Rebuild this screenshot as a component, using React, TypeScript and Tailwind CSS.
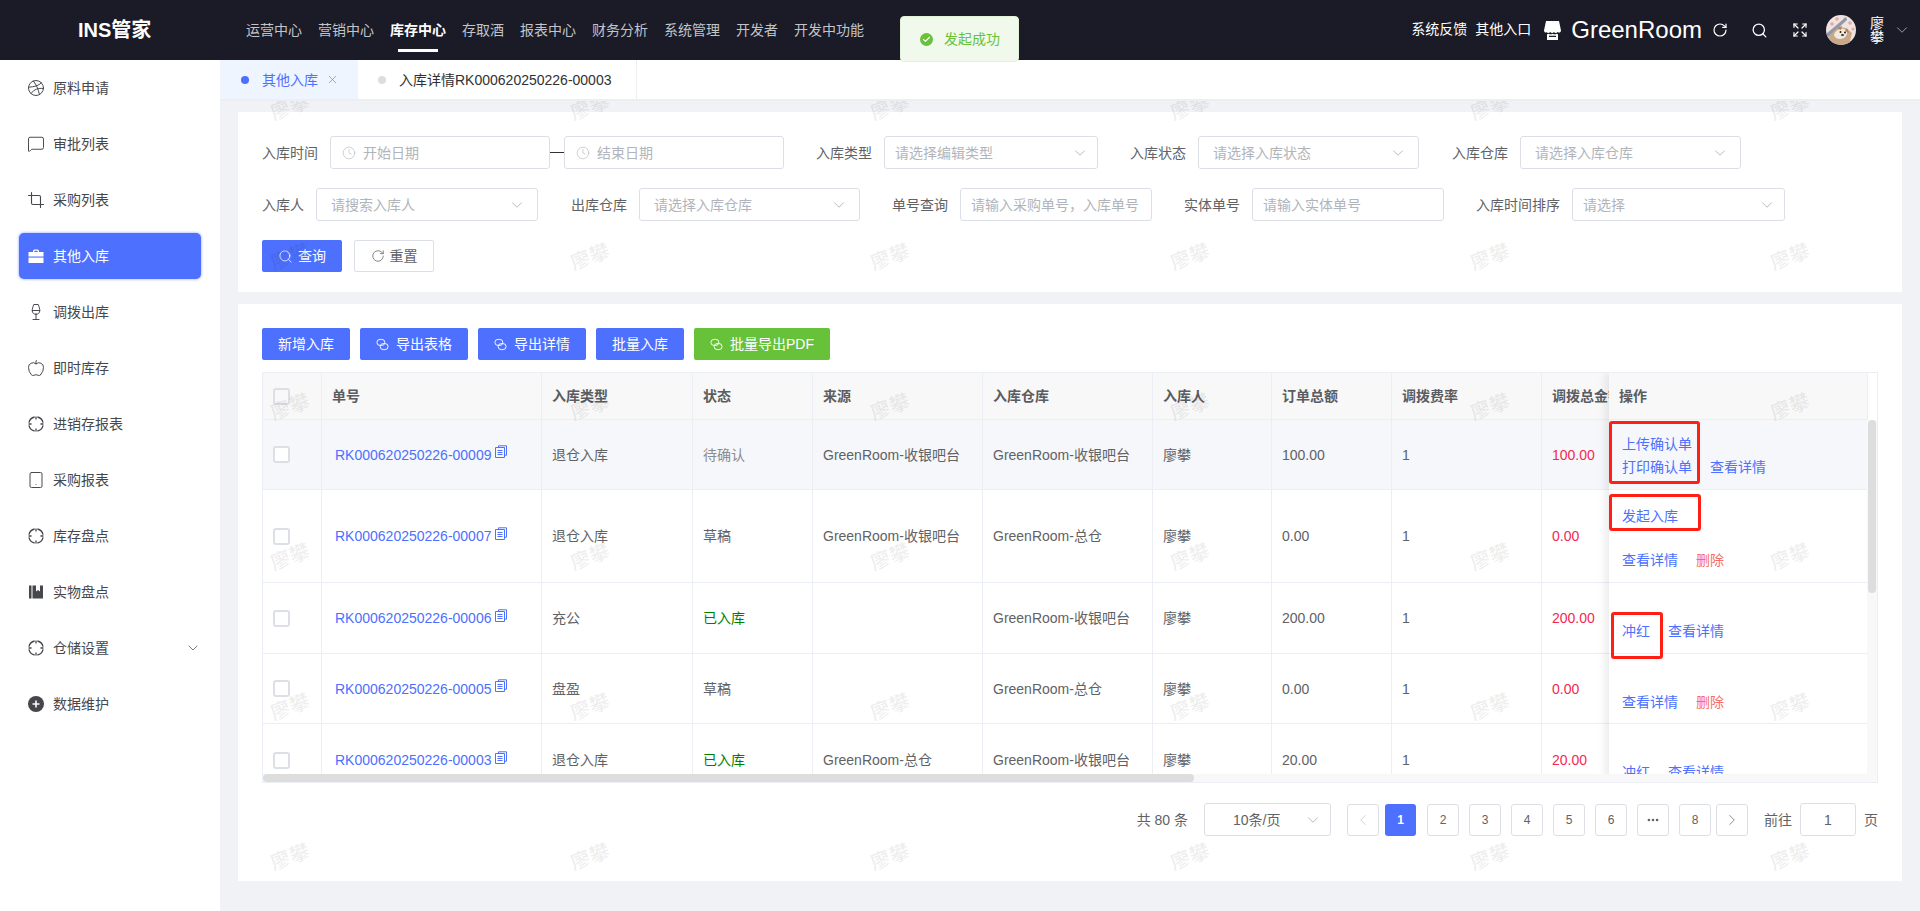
import { ReactNode } from 'react'
import {
  Apple,
  Check,
  ChevronDown,
  ChevronLeft,
  ChevronRight,
  Clock,
  Crop,
  Dribbble,
  Ellipsis,
  Expand,
  MessageSquare,
  RotateCw,
  Search,
  Tablet,
  Wine,
  X,
} from 'lucide-react'

const nav = ['运营中心', '营销中心', '库存中心', '存取酒', '报表中心', '财务分析', '系统管理', '开发者', '开发中功能']

function AimIcon() {
  return (
    <svg viewBox="0 0 16 16" className="w-4 h-4 shrink-0" fill="none" stroke="currentColor" strokeWidth="1.3">
      <path d="M6.6 1A7.100 7.100 0 0 0 1 6.600M9.400 1a7.100 7.100 0 0 1 5.600 5.600M15 9.400A7.100 7.100 0 0 1 9.400 15M6.600 15A7.100 7.100 0 0 1 1 9.400" />
      <path d="M8 .5v3M8 12.500v3M.5 8h3M12.500 8h3" />
    </svg>
  )
}

function SuitcaseIcon() {
  return (
    <svg viewBox="0 0 16 16" className="w-4 h-4 shrink-0" fill="currentColor">
      <path d="M5 3.400C5 2.300 5.600 1.600 6.600 1.600h2.800c1 0 1.600.7 1.600 1.800V4h4.500v4.600H.5V4H5v-.6ZM6.300 4h3.400v-.7c0-.3-.2-.5-.5-.5H6.800c-.3 0-.5.2-.5.5V4Z" />
      <path d="M.5 9.600h15V15H.5z" />
    </svg>
  )
}

function NotebookIcon() {
  return (
    <svg viewBox="0 0 16 16" className="w-4 h-4 shrink-0" fill="currentColor">
      <path d="M1 1.500h2.500v13H1zM4.500 1.500H8v6l2-1.600 2 1.600v-6h3v13H4.500z" />
    </svg>
  )
}

function PlusCircleIcon() {
  return (
    <svg viewBox="0 0 16 16" className="w-4 h-4 shrink-0">
      <circle cx="8" cy="8" r="8" fill="currentColor" />
      <path d="M8 4.500v7M4.500 8h7" stroke="#fff" strokeWidth="1.600" />
    </svg>
  )
}

function ExportIcon() {
  return (
    <svg viewBox="0 0 14 14" className="w-[13px] h-[13px] shrink-0" fill="none" stroke="currentColor" strokeWidth="1">
      <rect x="1" y="1.500" width="8.500" height="6.500" rx="3.250" />
      <rect x="4.500" y="6" width="8.500" height="6.500" rx="3.250" />
    </svg>
  )
}

function CopyIcon() {
  return (
    <svg viewBox="0 0 12 13" className="w-3 h-[13px] ml-1 -mt-[6px] shrink-0 text-[#4d70ff]" fill="none" stroke="currentColor" strokeWidth="1">
      <path d="M3.500 2V.8h8v9.400H9.500" />
      <path d="M.5 2.500h9v10h-9z" />
      <path d="M2.500 5.500h5M2.500 7.500h5M2.500 9.500h5" />
    </svg>
  )
}

function StoreIcon() {
  return (
    <svg viewBox="0 0 17 19" className="w-[17px] h-[19px] shrink-0" fill="#fff">
      <path d="M2 0h13l2 9.500c0 2-2.300 2.600-3.400 1.400-.9 1.300-2.900 1.300-3.700 0-.8 1.300-2.800 1.300-3.700 0-.9 1.300-2.900 1.300-3.700 0C2.300 12.100 0 11.500 0 9.500L2 0Z" />
      <path d="M3 13.200c.7 0 1.300-.2 1.600-.5.9.8 2.700.8 3.900 0 1.200.8 3 .8 3.900 0 .3.3.9.5 1.600.5V19H3v-5.800Zm2 2.800h7v-1.200H5V16Z" />
    </svg>
  )
}

function Avatar() {
  return (
    <svg viewBox="0 0 30 30" className="w-[30px] h-[30px] shrink-0 rounded-full">
      <rect width="30" height="30" fill="#efe3df" />
      <circle cx="6" cy="9" r="1.800" fill="#e3a9a4" />
      <circle cx="11" cy="4" r="1.800" fill="#e3a9a4" />
      <circle cx="24" cy="8" r="1.800" fill="#e3a9a4" />
      <circle cx="27" cy="14" r="1.500" fill="#e3a9a4" />
      <circle cx="19" cy="4" r="1.500" fill="#e3a9a4" />
      <path d="M0 19 20 2l1 3L0 24Z" fill="#8f97a8" />
      <path d="M4 30 3 21l9-9 8 1 6 5-3 12Z" fill="#c8a888" />
      <path d="M8 20c1-5 8-8 12-5 2 2 1 6-2 8-4 2-9 1-10-3Z" fill="#f2e9dd" />
      <path d="M11 13l5-2-1 4ZM21 13l2 5-4-2Z" fill="#b7824f" />
      <circle cx="14.500" cy="17" r="1" fill="#2a2220" />
      <circle cx="19" cy="17.500" r="1" fill="#2a2220" />
      <ellipse cx="16.500" cy="20" rx="1.500" ry="1.100" fill="#3a2c28" />
    </svg>
  )
}

function SideItem({ icon, label, active, arrow }: { icon: ReactNode; label: string; active?: boolean; arrow?: boolean }) {
  return (
    <div
      className={
        active
          ? 'flex items-center h-[46px] pl-[9px] pr-0 gap-[9px] rounded-[5px] bg-[#4d70ff] text-white shadow-[0_0_3px_rgba(77,112,255,0.7)]'
          : 'flex items-center h-[46px] pl-[9px] pr-0 gap-[9px] rounded-[5px] text-[#45474d]'
      }
    >
      <span className="w-4 h-4 flex items-center justify-center shrink-0">{icon}</span>
      <span className="flex-1">{label}</span>
      {arrow && <ChevronDown size={16} strokeWidth={1.100} />}
    </div>
  )
}

function Label({ children }: { children: ReactNode }) {
  return <span className="text-[#606266] whitespace-nowrap mr-3">{children}</span>
}

function Select({ text, width, tight }: { text: string; width: string; tight?: boolean }) {
  return (
    <div
      className={`${width} h-[33px] border border-[#dcdfe6] rounded-[3px] flex items-center ${tight ? 'pl-[10px] pr-2' : 'pl-[14px] pr-[11px]'} text-[#b1b4ba] bg-white`}
    >
      <span className="flex-1 whitespace-nowrap">{text}</span>
      <ChevronDown size={18} strokeWidth={1} className="text-[#a0a3aa]" />
    </div>
  )
}

function Input({ text, width }: { text: string; width: string }) {
  return (
    <div className={`${width} h-[33px] border border-[#dcdfe6] rounded-[3px] flex items-center pl-[10px] text-[#b1b4ba] bg-white whitespace-nowrap overflow-hidden`}>
      {text}
    </div>
  )
}

function DateInput({ text }: { text: string }) {
  return (
    <div className="w-[220px] h-[33px] border border-[#dcdfe6] rounded-[3px] flex items-center pl-[11px] gap-[7px] text-[#b1b4ba] bg-white">
      <Clock size={14} strokeWidth={1} />
      {text}
    </div>
  )
}

function BlueButton({ label, icon, green, width }: { label: string; icon?: boolean; green?: boolean; width: string }) {
  return (
    <div className={`${width} h-8 rounded-[2px] flex items-center justify-center gap-[7px] text-white ${green ? 'bg-[#67c23a]' : 'bg-[#4d70ff]'}`}>
      {icon && <ExportIcon />}
      {label}
    </div>
  )
}

const rows = [
  { no: 'RK000620250226-00009', type: '退仓入库', status: '待确认', from: 'GreenRoom-收银吧台', to: 'GreenRoom-收银吧台', total: '100.00', h: 'h-[70px]', hover: true },
  { no: 'RK000620250226-00007', type: '退仓入库', status: '草稿', from: 'GreenRoom-收银吧台', to: 'GreenRoom-总仓', total: '0.00', h: 'h-[93px]' },
  { no: 'RK000620250226-00006', type: '充公', status: '已入库', from: '', to: 'GreenRoom-收银吧台', total: '200.00', h: 'h-[71px]' },
  { no: 'RK000620250226-00005', type: '盘盈', status: '草稿', from: '', to: 'GreenRoom-总仓', total: '0.00', h: 'h-[70px]' },
  { no: 'RK000620250226-00003', type: '退仓入库', status: '已入库', from: 'GreenRoom-总仓', to: 'GreenRoom-收银吧台', total: '20.00', h: 'h-[73px]' },
]

const headers = ['单号', '入库类型', '状态', '来源', '入库仓库', '入库人', '订单总额', '调拨费率', '调拨总金额']

const cell = 'border-r border-b border-[#ebeef5] px-[10px] whitespace-nowrap'

function Link({ children, red }: { children: ReactNode; red?: boolean }) {
  return <span className={`leading-[23px] whitespace-nowrap ${red ? 'text-[#f56c6c]' : 'text-[#4d70ff]'}`}>{children}</span>
}

function DataTable() {
  return (
    <div className="relative w-[1616px] h-[411px] mt-3 border border-[#ebeef5] overflow-hidden bg-white">
      <table className="table-fixed border-separate border-spacing-0 w-[1605px]">
        <colgroup>
          <col className="w-[59px]" />
          <col className="w-[220px]" />
          <col className="w-[151px]" />
          <col className="w-[120px]" />
          <col className="w-[170px]" />
          <col className="w-[170px]" />
          <col className="w-[119px]" />
          <col className="w-[120px]" />
          <col className="w-[150px]" />
          <col className="w-[326px]" />
        </colgroup>
        <thead>
          <tr className="h-[47px] bg-[#f8f8f8] text-[#5a5c61]">
            <th className={cell}>
              <div className="w-[17px] h-[17px] border-2 border-[#dcdfe6] rounded-[3px]" />
            </th>
            {headers.map((h) => (
              <th key={h} className={`${cell} text-left font-bold overflow-hidden`}>
                {h}
              </th>
            ))}
            <th className="border-b border-[#ebeef5]" />
          </tr>
        </thead>
        <tbody className="text-[#606266]">
          {rows.map((r) => (
            <tr key={r.no} className={`${r.h} ${r.hover ? 'bg-[#f5f7fa]' : ''}`}>
              <td className={cell}>
                <div className="w-[17px] h-[17px] border-2 border-[#dcdfe6] rounded-[3px] bg-white" />
              </td>
              <td className={`${cell} pl-[13px]`}>
                <div className="flex items-center">
                  <span className="text-[#4d70ff]">{r.no}</span>
                  <CopyIcon />
                </div>
              </td>
              <td className={cell}>{r.type}</td>
              <td className={`${cell} ${r.status === '已入库' ? 'text-[#008000]' : r.status === '待确认' ? 'text-[#8a8c91]' : ''}`}>{r.status}</td>
              <td className={cell}>{r.from}</td>
              <td className={cell}>{r.to}</td>
              <td className={cell}>廖攀</td>
              <td className={cell}>{r.total}</td>
              <td className={cell}>1</td>
              <td className={`${cell} text-[#f5284f]`}>{r.total}</td>
              <td className="border-b border-[#ebeef5]" />
            </tr>
          ))}
        </tbody>
      </table>

      {/* fixed action column */}
      <div className="absolute left-[1346px] top-0 w-[259px] bg-white border-r border-[#ebeef5] shadow-[-4px_0_8px_rgba(0,0,0,0.08)]">
        <div className="h-[47px] bg-[#f8f8f8] border-b border-[#ebeef5] pl-[10px] flex items-center font-bold text-[#5a5c61]">操作</div>
        <div className="h-[70px] bg-[#f5f7fa] border-b border-[#ebeef5] pl-[13px] pt-[13px] flex items-end gap-[18px] box-border pb-[10px]">
          <div className="flex flex-col">
            <Link>上传确认单</Link>
            <Link>打印确认单</Link>
          </div>
          <Link>查看详情</Link>
        </div>
        <div className="h-[93px] border-b border-[#ebeef5] pl-[13px] pt-[15px] flex flex-col gap-[21px]">
          <Link>发起入库</Link>
          <div className="flex gap-[18px]">
            <Link>查看详情</Link>
            <Link red>删除</Link>
          </div>
        </div>
        <div className="h-[71px] border-b border-[#ebeef5] pl-[13px] pt-[37px] flex gap-[18px]">
          <Link>冲红</Link>
          <Link>查看详情</Link>
        </div>
        <div className="h-[70px] border-b border-[#ebeef5] pl-[13px] pt-[37px] flex gap-[18px]">
          <Link>查看详情</Link>
          <Link red>删除</Link>
        </div>
        <div className="h-[73px] pl-[13px] pt-[37px] flex gap-[18px]">
          <Link>冲红</Link>
          <Link>查看详情</Link>
        </div>

        {/* red annotation boxes */}
        <div className="absolute left-0 top-[48px] w-[91px] h-[63px] border-[3px] border-[#ff1f14] rounded-[3px]" />
        <div className="absolute left-0 top-[121px] w-[92px] h-[37px] border-[3px] border-[#ff1f14] rounded-[3px]" />
        <div className="absolute left-[2px] top-[239px] w-[52px] h-[47px] border-[3px] border-[#ff1f14] rounded-[3px]" />
      </div>

      {/* scrollbars */}
      <div className="absolute right-0 top-[47px] bottom-0 w-[10px] bg-[#f8f8f8]">
        <div className="mx-auto w-2 h-[173px] rounded bg-[#dddddd]" />
      </div>
      <div className="absolute left-0 right-0 bottom-0 h-2 bg-[#f8f8f8]">
        <div className="w-[931px] h-2 rounded bg-[#dddddd]" />
      </div>
    </div>
  )
}

function PageButton({ children, active, muted }: { children: ReactNode; active?: boolean; muted?: boolean }) {
  return (
    <div
      className={
        active
          ? 'w-[31px] h-[32px] rounded-[3px] bg-[#4d70ff] text-white font-bold text-xs flex items-center justify-center'
          : `w-[32px] h-[32px] rounded-[3px] border border-[#dcdfe6] text-xs flex items-center justify-center ${muted ? 'text-[#c0c4cc]' : 'text-[#606266]'}`
      }
    >
      {children}
    </div>
  )
}

function Pagination() {
  return (
    <div className="flex items-center justify-end mt-5 text-[#606266] pr-0">
      <span>共 80 条</span>
      <div className="ml-4 w-[127px] h-[33px] border border-[#dcdfe6] rounded-[3px] flex items-center pl-[28px] pr-2">
        <span className="flex-1">10条/页</span>
        <ChevronDown size={18} strokeWidth={1} className="text-[#a0a3aa]" />
      </div>
      <div className="ml-4 flex items-center">
        <PageButton muted>
          <ChevronLeft size={18} strokeWidth={1} />
        </PageButton>
        <div className="ml-[6px] mr-[11px]">
          <PageButton active>1</PageButton>
        </div>
        <div className="flex gap-[10px]">
          {['2', '3', '4', '5', '6'].map((p) => (
            <PageButton key={p}>{p}</PageButton>
          ))}
          <PageButton>
            <Ellipsis size={14} strokeWidth={2.500} />
          </PageButton>
          <PageButton>8</PageButton>
        </div>
        <div className="ml-[5px]">
          <PageButton>
            <ChevronRight size={18} strokeWidth={1} />
          </PageButton>
        </div>
      </div>
      <span className="ml-4">前往</span>
      <div className="mx-2 w-[56px] h-[33px] border border-[#dcdfe6] rounded-[3px] flex items-center justify-center">1</div>
      <span>页</span>
    </div>
  )
}

export default function App() {
  return (
    <div className="relative w-[1920px] h-[911px] overflow-hidden bg-[#f0f2f5] text-sm font-['Liberation_Sans','Noto_Sans_CJK_SC',sans-serif]">
      {/* Header */}
      <header className="h-[60px] bg-[#1a1b26] flex items-center text-white">
        <div className="w-[246px] pl-[78px] text-xl font-bold">INS管家</div>
        <nav className="flex gap-4">
          {nav.map((n) => (
            <div key={n} className={`relative h-[60px] flex items-center ${n === '库存中心' ? 'font-bold text-white' : 'text-[#c2c4ca]'}`}>
              {n}
              {n === '库存中心' && <div className="absolute left-2 right-2 bottom-2 h-[3px] bg-white" />}
            </div>
          ))}
        </nav>
        <div className="ml-auto flex items-center">
          <span className="-mt-0.5">系统反馈</span>
          <span className="ml-2 -mt-0.5">其他入口</span>
          <div className="ml-[13px]">
            <StoreIcon />
          </div>
          <span className="ml-[10px] text-2xl">GreenRoom</span>
          <RotateCw size={16} strokeWidth={1.800} className="ml-[10px]" />
          <Search size={17} strokeWidth={1.800} className="ml-[23px]" />
          <Expand size={16} strokeWidth={1.800} className="ml-[24px]" />
          <div className="ml-[18px]">
            <Avatar />
          </div>
          <div className="ml-[14px] w-[14px] leading-[14px] text-center">廖攀</div>
          <ChevronDown size={18} strokeWidth={1} className="ml-[9px] mr-[9px] text-[#c2c4ca]" />
        </div>
      </header>

      <div className="flex h-[851px]">
        {/* Sidebar */}
        <aside className="w-[220px] bg-white px-[19px] pt-[5px] flex flex-col gap-[10px] shrink-0">
          <SideItem icon={<Dribbble size={18} strokeWidth={1.300} className="shrink-0" />} label="原料申请" />
          <SideItem icon={<MessageSquare size={18} strokeWidth={1.300} className="shrink-0" />} label="审批列表" />
          <SideItem icon={<Crop size={18} strokeWidth={1.500} className="shrink-0" />} label="采购列表" />
          <SideItem icon={<SuitcaseIcon />} label="其他入库" active />
          <SideItem icon={<Wine size={18} strokeWidth={1.300} className="shrink-0" />} label="调拨出库" />
          <SideItem icon={<Apple size={18} strokeWidth={1.300} className="shrink-0" />} label="即时库存" />
          <SideItem icon={<AimIcon />} label="进销存报表" />
          <SideItem icon={<Tablet size={18} strokeWidth={1.300} className="shrink-0" />} label="采购报表" />
          <SideItem icon={<AimIcon />} label="库存盘点" />
          <SideItem icon={<NotebookIcon />} label="实物盘点" />
          <SideItem icon={<AimIcon />} label="仓储设置" arrow />
          <SideItem icon={<PlusCircleIcon />} label="数据维护" />
        </aside>

        <main className="flex-1 min-w-0">
          {/* Tabs */}
          <div className="h-[41px] bg-white border-b-2 border-[#eceef2] flex items-center">
            <div className="w-[138px] h-full bg-[#eef5ff] flex items-center pl-[21px] text-[#4d70ff]">
              <span className="w-2 h-2 rounded-full bg-[#4d70ff]" />
              <span className="ml-[13px]">其他入库</span>
              <X size={13} strokeWidth={1.100} className="ml-[8px]" />
            </div>
            <div className="w-[279px] h-full border-r border-[#eceef2] flex items-center pl-5 text-[#303133]">
              <span className="w-2 h-2 rounded-full bg-[#dddddd]" />
              <span className="ml-[13px]">入库详情RK000620250226-00003</span>
            </div>
          </div>

          <div className="px-[18px] pt-[11px]">
            {/* Filters */}
            <section className="h-[180px] bg-white pt-6 px-6">
              <div className="flex items-center">
                <Label>入库时间</Label>
                <DateInput text="开始日期" />
                <div className="w-[14px] h-px bg-[#303133]" />
                <DateInput text="结束日期" />
                <div className="ml-8 flex items-center">
                  <Label>入库类型</Label>
                  <Select text="请选择编辑类型" width="w-[214px]" tight />
                </div>
                <div className="ml-8 flex items-center">
                  <Label>入库状态</Label>
                  <Select text="请选择入库状态" width="w-[221px]" />
                </div>
                <div className="ml-[33px] flex items-center">
                  <Label>入库仓库</Label>
                  <Select text="请选择入库仓库" width="w-[221px]" />
                </div>
              </div>
              <div className="flex items-center mt-[19px]">
                <Label>入库人</Label>
                <Select text="请搜索入库人" width="w-[222px]" />
                <div className="ml-[33px] flex items-center">
                  <Label>出库仓库</Label>
                  <Select text="请选择入库仓库" width="w-[221px]" />
                </div>
                <div className="ml-8 flex items-center">
                  <Label>单号查询</Label>
                  <Input text="请输入采购单号，入库单号" width="w-[192px]" />
                </div>
                <div className="ml-8 flex items-center">
                  <Label>实体单号</Label>
                  <Input text="请输入实体单号" width="w-[192px]" />
                </div>
                <div className="ml-8 flex items-center">
                  <Label>入库时间排序</Label>
                  <Select text="请选择" width="w-[213px]" tight />
                </div>
              </div>
              <div className="flex gap-3 mt-[19px]">
                <div className="w-[80px] h-8 rounded-[2px] bg-[#4d70ff] text-white flex items-center justify-center gap-[5px]">
                  <Search size={15} strokeWidth={1.300} />
                  查询
                </div>
                <div className="w-[80px] h-8 rounded-[2px] border border-[#dcdfe6] text-[#606266] flex items-center justify-center gap-[5px]">
                  <RotateCw size={14} strokeWidth={1.300} />
                  重置
                </div>
              </div>
            </section>

            {/* Table panel */}
            <section className="h-[577px] bg-white mt-3 pt-6 px-6">
              <div className="flex gap-[10px]">
                <BlueButton label="新增入库" width="w-[88px]" />
                <BlueButton label="导出表格" icon width="w-[108px]" />
                <BlueButton label="导出详情" icon width="w-[108px]" />
                <BlueButton label="批量入库" width="w-[88px]" />
                <BlueButton label="批量导出PDF" icon green width="w-[136px]" />
              </div>
              <DataTable />
              <Pagination />
            </section>
          </div>
        </main>
      </div>

      {/* Watermark */}
      <div className="absolute left-[220px] top-[101px] right-0 bottom-0 overflow-hidden pointer-events-none">
        <div className="grid grid-cols-[repeat(6,300px)] auto-rows-[150px] -ml-[80px] -mt-[69px] w-[1800px]">
          {Array.from({ length: 36 }).map((_, i) => (
            <div key={i} className="flex items-center justify-center">
              <span className="-rotate-20 text-xl font-bold text-black/[0.07]">廖攀</span>
            </div>
          ))}
        </div>
      </div>

      {/* Toast */}
      <div className="absolute left-[900px] top-4 w-[119px] h-[46px] rounded-[4px] bg-[#f0f9eb] border border-[#e1f3d8] flex items-center pl-[19px] text-[#67c23a]">
        <span className="w-[13px] h-[13px] rounded-full bg-[#67c23a] text-white flex items-center justify-center">
          <Check size={9} strokeWidth={3} />
        </span>
        <span className="ml-[11px] whitespace-nowrap">发起成功</span>
      </div>
    </div>
  )
}
